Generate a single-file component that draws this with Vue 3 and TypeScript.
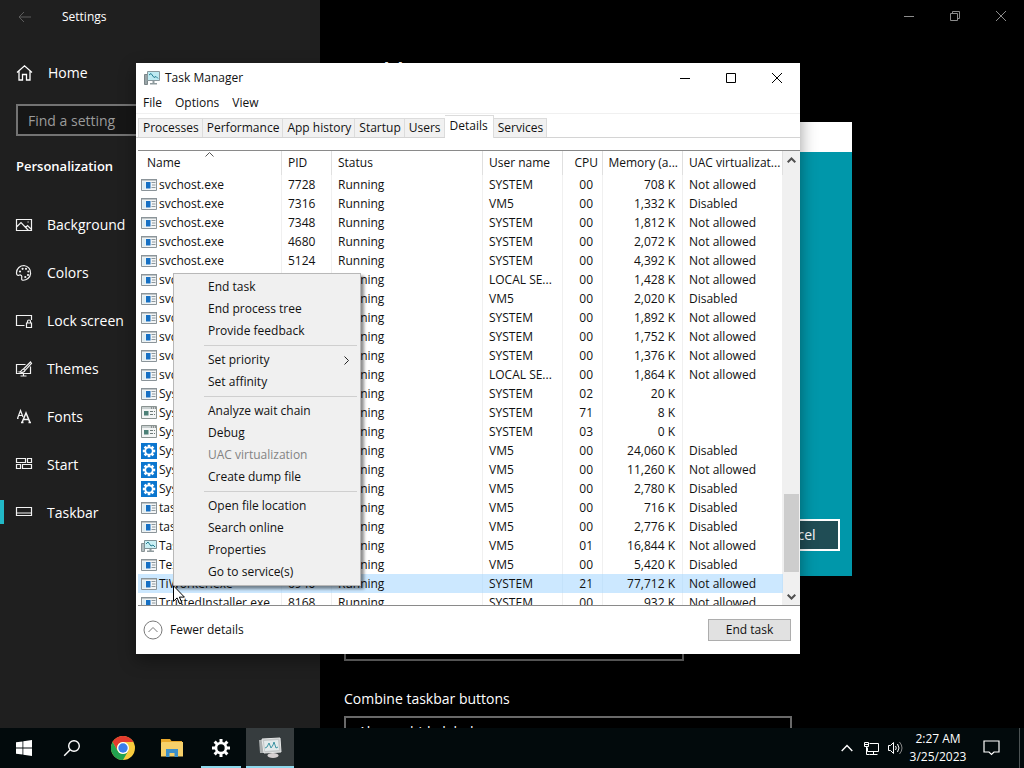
<script setup lang="ts">
import { ref } from 'vue'

type IconKind = 'app' | 'sys' | 'gear' | 'monitor'

interface ProcessRow {
  icon: IconKind
  name: string
  pid: string
  user: string
  cpu: string
  memory: string
  uac: string
  selected?: boolean
}

interface MenuEntry {
  label: string
  disabled?: boolean
  submenu?: boolean
}

const search = ref('')

const navItems = ['Background', 'Colors', 'Lock screen', 'Themes', 'Fonts', 'Start', 'Taskbar']
const tabs = ['Processes', 'Performance', 'App history', 'Startup', 'Users', 'Details', 'Services']

const row = (
  icon: IconKind,
  name: string,
  pid: string,
  user: string,
  cpu: string,
  memory: string,
  uac: string,
  selected = false,
): ProcessRow => ({ icon, name, pid, user, cpu, memory, uac, selected })

const rows: ProcessRow[] = [
  row('app', 'svchost.exe', '7728', 'SYSTEM', '00', '708 K', 'Not allowed'),
  row('app', 'svchost.exe', '7316', 'VM5', '00', '1,332 K', 'Disabled'),
  row('app', 'svchost.exe', '7348', 'SYSTEM', '00', '1,812 K', 'Not allowed'),
  row('app', 'svchost.exe', '4680', 'SYSTEM', '00', '2,072 K', 'Not allowed'),
  row('app', 'svchost.exe', '5124', 'SYSTEM', '00', '4,392 K', 'Not allowed'),
  row('app', 'svchost', '', 'LOCAL SE...', '00', '1,428 K', 'Not allowed'),
  row('app', 'svchost', '', 'VM5', '00', '2,020 K', 'Disabled'),
  row('app', 'svchost', '', 'SYSTEM', '00', '1,892 K', 'Not allowed'),
  row('app', 'svchost', '', 'SYSTEM', '00', '1,752 K', 'Not allowed'),
  row('app', 'svchost', '', 'SYSTEM', '00', '1,376 K', 'Not allowed'),
  row('app', 'svchost', '', 'LOCAL SE...', '00', '1,864 K', 'Not allowed'),
  row('app', 'System', '', 'SYSTEM', '02', '20 K', ''),
  row('sys', 'System', '', 'SYSTEM', '71', '8 K', ''),
  row('sys', 'System', '', 'SYSTEM', '03', '0 K', ''),
  row('gear', 'System', '', 'VM5', '00', '24,060 K', 'Disabled'),
  row('gear', 'System', '', 'VM5', '00', '11,260 K', 'Not allowed'),
  row('gear', 'System', '', 'VM5', '00', '2,780 K', 'Disabled'),
  row('app', 'taskhost', '', 'VM5', '00', '716 K', 'Disabled'),
  row('app', 'taskhost', '', 'VM5', '00', '2,776 K', 'Disabled'),
  row('monitor', 'Taskmgr', '', 'VM5', '01', '16,844 K', 'Not allowed'),
  row('app', 'TextInput', '', 'VM5', '00', '5,420 K', 'Disabled'),
  row('app', 'TiWorker.exe', '6940', 'SYSTEM', '21', '77,712 K', 'Not allowed', true),
  row('app', 'TrustedInstaller.exe', '8168', 'SYSTEM', '00', '932 K', 'Not allowed'),
]

const menuGroups: MenuEntry[][] = [
  [{ label: 'End task' }, { label: 'End process tree' }, { label: 'Provide feedback' }],
  [{ label: 'Set priority', submenu: true }, { label: 'Set affinity' }],
  [
    { label: 'Analyze wait chain' },
    { label: 'Debug' },
    { label: 'UAC virtualization', disabled: true },
    { label: 'Create dump file' },
  ],
  [
    { label: 'Open file location' },
    { label: 'Search online' },
    { label: 'Properties' },
    { label: 'Go to service(s)' },
  ],
]

const teeth = [0, 45, 90, 135, 180, 225, 270, 315]
</script>

<template>
  <div class="desktop">
    <section class="settings">
      <aside class="side">
        <header class="side-title">
          <button class="back" aria-label="Back">
            <svg width="14" height="12" viewBox="0 0 14 12" fill="none" stroke="#5c5c5c"><path d="M13 6H1M6 1L1 6l5 5" /></svg>
          </button>
          <span>Settings</span>
        </header>
        <a href="#" class="nav-item home">
          <svg width="18" height="18" viewBox="0 0 18 18" fill="none" stroke="#fff" stroke-width="1.3"><path d="M2 8.500L9.500 1.800l7.500 6.700M4 7v9h3.500v-5.500h4V16H15V7" /></svg>
          <span>Home</span>
        </a>
        <input v-model="search" class="find" type="text" placeholder="Find a setting" aria-label="Find a setting" />
        <h2>Personalization</h2>
        <nav>
          <a v-for="item in navItems" :key="item" href="#" class="nav-item" :class="{ current: item === 'Taskbar' }">
            <svg width="18" height="18" viewBox="0 0 18 18" fill="none" stroke="#f2f2f2" stroke-width="1.2">
              <template v-if="item === 'Background'">
                <path d="M1.500 3.500h15v11h-15zM1.500 11l4.500-4.500 7.500 8M10.500 11.500l2-2 4 4" />
                <path d="M12.500 6h1.200" />
              </template>
              <template v-else-if="item === 'Colors'">
                <path d="M9 1.500a7.300 7.300 0 1 1-1.500 14.700c-1.700-.4-.6-2.300-.7-3.700-.1-1.700-1.900-1.700-2.900-1.300C2.500 11.800 1.400 10.500 1.500 8.800 1.700 4.500 5 1.500 9 1.500z" />
                <g fill="#f2f2f2" stroke="none"><circle cx="5" cy="7.500" r="1.100" /><circle cx="7.600" cy="4.800" r="1.100" /><circle cx="11" cy="4.800" r="1.100" /><circle cx="13.400" cy="7.500" r="1.100" /><circle cx="13" cy="11" r="1.100" /><circle cx="10.300" cy="13" r="1.100" /></g>
              </template>
              <template v-else-if="item === 'Lock screen'">
                <path d="M9.500 13.500h-8v-10h15V8M11.500 11h5v4.500h-5zM12.500 11V9.500a1.500 1.500 0 0 1 3 0V11" />
              </template>
              <template v-else-if="item === 'Themes'">
                <path d="M10.500 4.500h-9v9h14v-7M8.500 13.500v2.500M5.500 16h6" />
                <path d="M15.500 2L8.500 9l1.500 1.500L16.500 3.500zM8.500 9c-2 0-1.500 2.500-4 3 2.500.8 5.500 0 5.500-1.500" />
              </template>
              <template v-else-if="item === 'Fonts'">
                <path d="M2.500 10.500L5.500 2.500l2.500 6.500M3.500 7.500h3.500M2 10.500h1.500" />
                <path d="M7 14.500l4-9.500 4 9.500M8.500 11.500h5M6 14.500h2.500M13.500 14.500h2.500" stroke-width="1.500" />
              </template>
              <template v-else-if="item === 'Start'">
                <path d="M1.500 2.500h9v4h-9zM12.500 2.500h4v4h-4zM1.500 8.500h4v4h-4zM7.500 8.500h9v4h-9z" />
              </template>
              <path v-else d="M1.500 3.500h15v8h-15zM1.500 9h15" />
            </svg>
            <span>{{ item }}</span>
          </a>
        </nav>
      </aside>
      <main class="page">
        <div class="window-controls dim">
          <button aria-label="Minimize settings"><svg width="10" height="10" viewBox="0 0 10 10" fill="none" stroke="#8c8c8c"><path d="M0 5.500h10" /></svg></button>
          <button aria-label="Restore settings"><svg width="10" height="10" viewBox="0 0 10 10" fill="none" stroke="#8c8c8c"><path d="M.5 2.500h7v7h-7zM2.500 2.500v-2h7v7h-2" /></svg></button>
          <button aria-label="Close settings"><svg width="10" height="10" viewBox="0 0 10 10" fill="none" stroke="#8c8c8c"><path d="M0 0l10 10M10 0L0 10" /></svg></button>
        </div>
        <h1>Taskbar</h1>
        <form class="fields">
          <select class="narrow" aria-label="Taskbar location on screen"><option>Bottom</option></select>
          <label for="combine">Combine taskbar buttons</label>
          <select id="combine"><option>Always, hide labels</option></select>
        </form>
      </main>
    </section>

    <section class="dialog">
      <div class="dialog-bar"></div>
      <div class="dialog-body"><button>Cancel</button></div>
    </section>

    <section class="taskman">
      <header class="tm-title">
        <svg width="16" height="16" viewBox="0 0 16 16"><path d="M.5 4.500h3v10h-3z" fill="#9aa5a8" stroke="#7b8588" /><path d="M3.500 1.500h12v9h-12z" fill="#bdeaf2" stroke="#89989d" /><path d="M5 5l2-1.500 3 4 2-1 2 2" fill="none" stroke="#257d91" /><path d="M8.500 11h2v2h-2zM6 13h7v1.500H6z" fill="#8f9b9e" /></svg>
        <span>Task Manager</span>
        <div class="window-controls">
          <button aria-label="Minimize"><svg width="10" height="10" viewBox="0 0 10 10" fill="none" stroke="#000"><path d="M0 5.500h10" /></svg></button>
          <button aria-label="Maximize"><svg width="10" height="10" viewBox="0 0 10 10" fill="none" stroke="#000"><path d="M.5.5h9v9h-9z" /></svg></button>
          <button aria-label="Close"><svg width="10" height="10" viewBox="0 0 10 10" fill="none" stroke="#000"><path d="M0 0l10 10M10 0L0 10" /></svg></button>
        </div>
      </header>
      <div class="menubar"><button>File</button><button>Options</button><button>View</button></div>
      <div class="tabs" role="tablist">
        <button v-for="tab in tabs" :key="tab" role="tab" :aria-selected="tab === 'Details'" :class="{ active: tab === 'Details' }">{{ tab }}</button>
      </div>
      <div class="list">
        <div class="grid-wrap">
          <table>
            <colgroup><col class="c-name" /><col class="c-pid" /><col class="c-status" /><col class="c-user" /><col class="c-cpu" /><col class="c-mem" /><col class="c-uac" /></colgroup>
            <thead>
              <tr>
                <th class="sorted">Name<svg width="9" height="5" viewBox="0 0 9 5" fill="none" stroke="#555"><path d="M.5 4.500l4-4 4 4" /></svg></th>
                <th>PID</th>
                <th>Status</th>
                <th>User name</th>
                <th class="num">CPU</th>
                <th class="num">Memory (a...</th>
                <th>UAC virtualizat...</th>
              </tr>
            </thead>
            <tbody>
              <tr v-for="(p, i) in rows" :key="i" :class="{ selected: p.selected }">
                <td>
                  <div class="name">
                    <svg width="16" height="16" viewBox="0 0 16 16">
                      <template v-if="p.icon === 'app'">
                        <path d="M.5 2.500h15v11H.5z" fill="#f3f5f6" stroke="#8b9499" /><path d="M0 2h16v1.500H0z" fill="#8b9499" />
                        <path d="M1.500 4.500h3v8h-3z" fill="#dcecf2" /><path d="M5 5h4.500v6.500H5z" fill="#1670c4" />
                        <path d="M10.500 5.500h4M11 8h3.500M10.500 10.500h4" stroke="#8d989e" />
                      </template>
                      <template v-else-if="p.icon === 'sys'">
                        <path d="M.5 1.500h15v12H.5z" fill="#f3f5f5" stroke="#8a9391" /><path d="M1 2h14v2H1z" fill="#c8cfcf" /><path d="M10 3h1M12 3h1M14 3h1" stroke="#555" />
                        <path d="M3 6h4.500v4.500H3z" fill="#4c8077" /><path d="M9 6.500h3M9 9.500h3M13 6.500h1M13 9.500h1" stroke="#6c7977" />
                      </template>
                      <template v-else-if="p.icon === 'gear'">
                        <path d="M0 0h16v16H0z" fill="#0b76cf" />
                        <g fill="#fff"><rect v-for="a in teeth" :key="a" x="6.700" y="1.800" width="2.600" height="3" :transform="`rotate(${a} 8 8)`" /></g>
                        <circle cx="8" cy="8" r="3.700" fill="none" stroke="#fff" stroke-width="1.700" />
                      </template>
                      <template v-else>
                        <path d="M.5 5.500h3v8h-3z" fill="#b3bdbf" stroke="#8a9497" /><path d="M3.500 2.500h12v8h-12z" fill="#c9eff4" stroke="#7f9297" />
                        <path d="M5 6l2-2 3 4 2-1 2 2" fill="none" stroke="#257d91" /><path d="M8.500 11h2v1.500h-2zM6 12.500h7V14H6z" fill="#8f9b9e" />
                      </template>
                    </svg>
                    <span>{{ p.name }}</span>
                  </div>
                </td>
                <td>{{ p.pid }}</td>
                <td>Running</td>
                <td>{{ p.user }}</td>
                <td class="num cpu">{{ p.cpu }}</td>
                <td class="num">{{ p.memory }}</td>
                <td>{{ p.uac }}</td>
              </tr>
            </tbody>
          </table>
        </div>
        <div class="scroll">
          <button aria-label="Scroll up"><svg width="9" height="6" viewBox="0 0 9 6" fill="none" stroke="#505050" stroke-width="2"><path d="M.7 5.300l3.800-3.800 3.800 3.800" /></svg></button>
          <div class="track"><div class="thumb"></div></div>
          <button aria-label="Scroll down"><svg width="9" height="6" viewBox="0 0 9 6" fill="none" stroke="#505050" stroke-width="2"><path d="M.7.7l3.800 3.800L8.300.7" /></svg></button>
        </div>
      </div>
      <footer class="tm-foot">
        <button class="fewer">
          <svg width="20" height="20" viewBox="0 0 20 20" fill="none" stroke="#7a7a7a"><circle cx="10" cy="10" r="9" /><path d="M5.500 12l4.500-4.500 4.500 4.500" /></svg>
          <span>Fewer details</span>
        </button>
        <button class="end">End task</button>
      </footer>
    </section>

    <div class="context" role="menu">
      <div v-for="(group, g) in menuGroups" :key="g" class="group">
        <button v-for="entry in group" :key="entry.label" role="menuitem" :disabled="entry.disabled">
          <span>{{ entry.label }}</span>
          <svg v-if="entry.submenu" width="5" height="9" viewBox="0 0 5 9" fill="none" stroke="#222"><path d="M.5.5l4 4-4 4" /></svg>
        </button>
      </div>
    </div>

    <svg class="cursor" width="13" height="20" viewBox="0 0 13 20"><path d="M.5.8v15.500l3.600-3.400 2.500 5.800 2.300-1-2.500-5.600h5z" fill="#fff" stroke="#000" /></svg>

    <footer class="taskbar">
      <button aria-label="Start"><svg width="16" height="16" viewBox="0 0 16 16" fill="#fff"><path d="M0 2.300L6.500 1.400v6.200H0zM7.300 1.300L16 0v7.600H7.300zM0 8.400h6.500v6.200L0 13.700zM7.300 8.400H16V16l-8.700-1.300z" /></svg></button>
      <button aria-label="Search"><svg width="18" height="18" viewBox="0 0 18 18" fill="none" stroke="#fff" stroke-width="1.400"><circle cx="11" cy="7" r="5.300" /><path d="M7.200 10.800L1.200 16.800" /></svg></button>
      <div class="apps">
        <button aria-label="Chrome">
          <svg width="24" height="24" viewBox="0 0 24 24">
            <circle cx="12" cy="12" r="12" fill="#f9cb3d" />
            <path d="M1.600 6A12 12 0 0 1 22.400 6H12a6 6 0 0 0-5.200 9z" fill="#e33b2e" />
            <path d="M1.600 6A12 12 0 0 0 12 24l5.200-9A6 6 0 0 1 6.800 15z" fill="#22a350" />
            <circle cx="12" cy="12" r="6" fill="#fff" /><circle cx="12" cy="12" r="4.700" fill="#3a7eea" />
          </svg>
        </button>
        <button aria-label="File Explorer">
          <svg width="22" height="18" viewBox="0 0 22 18"><path d="M0 0h9l1.500 2H21v15H0z" fill="#e9a92c" /><path d="M1 3h21v14.500H0V4z" fill="#f6d06a" /><path d="M5 10h12v8h-3.500v-4h-5v4H5z" fill="#3c8fca" /></svg>
        </button>
        <button class="running" aria-label="Settings">
          <svg width="18" height="18" viewBox="0 0 18 18"><g fill="#fff"><rect v-for="a in teeth" :key="a" x="7.500" y="0" width="3" height="4" :transform="`rotate(${a} 9 9)`" /></g><circle cx="9" cy="9" r="5" fill="none" stroke="#fff" stroke-width="2.600" /></svg>
        </button>
        <button class="focused" aria-label="Task Manager">
          <svg width="24" height="22" viewBox="0 0 24 22"><path d="M1 3h6v13H2z" fill="#a9adae" /><path d="M4 2l18-1 1 14-17 1z" fill="#c4c8c9" stroke="#e6e8e8" /><path d="M6 4l14-1 1 10-14 1z" fill="#e3eaeb" /><path d="M7 11l2-1 2-4 2 5 2-3 1-3 2 6 2-1" fill="none" stroke="#3d94a3" /><ellipse cx="15" cy="18.500" rx="5.500" ry="2.500" fill="#d5d0d1" /></svg>
        </button>
      </div>
      <div class="tray">
        <button aria-label="Show hidden icons"><svg width="12" height="8" viewBox="0 0 12 8" fill="none" stroke="#fff" stroke-width="1.400"><path d="M.7 7L6 1.500 11.300 7" /></svg></button>
        <button aria-label="Network"><svg width="17" height="15" viewBox="0 0 17 15" fill="none" stroke="#fff"><path d="M6.500 2.500h9v8h-11v-4M10.500 10.500v3M6.500 13.500h8M1.500 1.500h4v4h-4zM3.500 5.500v8h3M2 3.500h3" /></svg></button>
        <button aria-label="Volume"><svg width="17" height="16" viewBox="0 0 17 16" fill="none" stroke="#fff"><path d="M1.500 5.500h2l3-3v11l-3-3h-2zM8.500 6q1.500 2 0 4M10.500 4q3 4 0 8" /><path d="M12.500 2q5 6 0 12" stroke="#888" /></svg></button>
        <button class="clock"><span>2:27 AM</span><span>3/25/2023</span></button>
        <button class="notify" aria-label="Notifications"><svg width="17" height="16" viewBox="0 0 17 16" fill="none" stroke="#fff" stroke-width="1.200"><path d="M1 1h15v11h-5l-2.500 2.500L6 12H1z" /></svg></button>
        <button class="peek" aria-label="Show desktop"></button>
      </div>
    </footer>
  </div>
</template>

<style>
body {
  margin: 0;
  background: #000;
}
</style>

<style scoped>
.desktop {
  position: relative;
  display: flex;
  flex-direction: column;
  height: 100vh;
  overflow: hidden;
  background: #000;
  color: #fff;
  font: 12px/16px "Open Sans", "Noto Sans", sans-serif;
}

.desktop *,
.desktop *::before {
  box-sizing: border-box;
}

button,
input,
select {
  margin: 0;
  padding: 0;
  border: 0;
  border-radius: 0;
  background: none;
  color: inherit;
  font: inherit;
}

svg {
  display: block;
  flex: none;
}

a {
  color: inherit;
  text-decoration: none;
}

/* Settings window */
.settings {
  display: grid;
  grid-template-columns: 320px 1fr;
  flex: 1;
  min-height: 0;
  overflow: hidden;
}

.side {
  background: #1f1f1f;
}

.side-title {
  display: flex;
  align-items: center;
  gap: 30px;
  height: 33px;
  padding-left: 18px;
}

.nav-item {
  position: relative;
  display: flex;
  align-items: center;
  gap: 14px;
  height: 48px;
  padding-left: 15px;
  font-size: 14px;
  line-height: 20px;
}

.home {
  gap: 15px;
  margin: 16px 0 7px;
}

.current::before {
  content: "";
  position: absolute;
  left: 0;
  top: 11px;
  width: 4px;
  height: 24px;
  background: #22b8c6;
}

.find {
  display: block;
  width: 288px;
  height: 32px;
  margin-left: 16px;
  padding: 0 10px;
  border: 2px solid #737373;
  background: #161616;
  font-size: 14px;
}

.find::placeholder {
  color: #9b9b9b;
  opacity: 1;
}

h2 {
  margin: 20px 0 25px 16px;
  font-size: 13px;
  line-height: 20px;
  font-weight: 600;
}

.page {
  display: flex;
  flex-direction: column;
  min-height: 0;
}

.window-controls {
  display: flex;
  justify-content: flex-end;
  height: 32px;
}

.window-controls button {
  display: grid;
  place-items: center;
  width: 46px;
}

h1 {
  margin: 23px 24px 0;
  font-size: 24px;
  line-height: 32px;
  font-weight: 600;
}

.fields {
  display: flex;
  flex-direction: column;
  margin: auto 24px -20px;
  font-size: 14px;
}

.fields select {
  appearance: none;
  width: 448px;
  height: 32px;
  padding: 0 12px;
  border: 2px solid #696969;
  background: #000;
  color: #fff;
  font-size: 14px;
}

.fields .narrow {
  width: 340px;
}

.fields label {
  margin: 28px 0 7px;
  line-height: 20px;
}

/* Teal dialog behind the task manager */
.dialog {
  position: absolute;
  left: 460px;
  top: 122px;
  width: 392px;
}

.dialog-bar {
  height: 30px;
  background: #fff;
}

.dialog-body {
  display: flex;
  justify-content: flex-end;
  align-items: flex-end;
  height: 424px;
  padding: 25px 12px;
  background: #0097aa;
}

.dialog-body button {
  width: 92px;
  height: 32px;
  border: 2px solid #fff;
  background: #204d55;
  font-size: 14px;
}

/* Task manager */
.taskman {
  position: absolute;
  left: 136px;
  top: 63px;
  width: 664px;
  background: #fff;
  color: #111;
  box-shadow: 0 6px 16px rgba(0, 0, 0, 0.4);
}

.tm-title {
  display: flex;
  align-items: center;
  gap: 5px;
  height: 30px;
  padding-left: 8px;
}

.tm-title .window-controls {
  margin-left: auto;
  height: 28px;
}

.menubar {
  display: flex;
  gap: 13px;
  height: 21px;
  padding: 0 7px;
  border-bottom: 1px solid #f0f0f0;
}

.tabs {
  display: flex;
  align-items: flex-end;
  height: 24px;
  padding-left: 2px;
  border-bottom: 1px solid #d4d4d4;
}

.tabs button {
  height: 19px;
  padding: 0 3px 0 4px;
  border: 1px solid #dcdcdc;
  border-left-width: 0;
  border-bottom: 0;
  background: #f1f1f1;
}

.tabs button:first-child {
  border-left-width: 1px;
}

.tabs .active {
  height: 23px;
  margin-bottom: -1px;
  padding: 0 5px 3px;
  background: #fff;
}

.list {
  display: flex;
  height: 456px;
  margin: 12px 0 0 2px;
  border-top: 1px solid #8a8a8a;
  border-bottom: 1px solid #8a8a8a;
}

.grid-wrap {
  flex: 1;
  min-width: 0;
  overflow: hidden;
}

table {
  width: 100%;
  table-layout: fixed;
  border-collapse: separate;
  border-spacing: 0;
}

.c-name { width: 144px; }
.c-pid { width: 50px; }
.c-status { width: 151px; }
.c-user { width: 80px; }
.c-cpu { width: 40px; }
.c-mem { width: 80px; }

th,
td {
  height: 19px;
  padding: 0 6px;
  border-right: 1px solid #f0f0f0;
  font-weight: 400;
  line-height: 16px;
  text-align: left;
  white-space: nowrap;
  overflow: hidden;
}

th {
  height: 24px;
  padding-right: 0;
  border-right-color: #e0e0e0;
}

th:first-child {
  padding-left: 9px;
}

td:first-child {
  padding: 0 0 0 3px;
}

th.num {
  padding: 0 4px 0 0;
  text-align: right;
}

td.num {
  padding-right: 7px;
  text-align: right;
}

td.cpu {
  padding-right: 9px;
}

.sorted {
  position: relative;
}

.sorted svg {
  position: absolute;
  left: 67px;
  top: 1px;
}

.name {
  display: flex;
  align-items: center;
  gap: 2px;
}

.selected td {
  background: #cce8ff;
  border-right-color: #c4e2fa;
}

.scroll {
  display: flex;
  flex-direction: column;
  width: 17px;
  background: #f0f0f0;
}

.scroll button {
  display: grid;
  place-items: center;
  height: 17px;
}

.track {
  display: flex;
  flex-direction: column;
  justify-content: flex-end;
  flex: 1;
  padding: 0 1px 16px;
}

.thumb {
  height: 78px;
  background: #cdcdcd;
}

.tm-foot {
  display: flex;
  align-items: center;
  justify-content: space-between;
  height: 48px;
  padding: 0 9px 0 7px;
}

.fewer {
  display: flex;
  align-items: center;
  gap: 7px;
}

.end {
  width: 83px;
  height: 22px;
  border: 1px solid #adadad;
  background: #e1e1e1;
}

/* Context menu */
.context {
  position: absolute;
  left: 173px;
  top: 273px;
  width: 188px;
  padding: 2px;
  border: 1px solid #b8b8b8;
  background: #f0f0f0;
  color: #111;
  box-shadow: 3px 3px 3px rgba(0, 0, 0, 0.45);
}

.group + .group::before {
  content: "";
  display: block;
  height: 1px;
  margin: 3px 1px 3px 28px;
  background: #cfcfcf;
}

.context button {
  display: flex;
  align-items: center;
  justify-content: space-between;
  width: 100%;
  height: 22px;
  padding: 0 9px 0 32px;
}

.context button:disabled {
  color: #838383;
}

.cursor {
  position: absolute;
  left: 173px;
  top: 585px;
}

/* Taskbar */
.taskbar {
  display: flex;
  height: 40px;
  background: #020a0c;
}

.taskbar > button,
.apps button {
  display: grid;
  place-items: center;
  width: 48px;
}

.apps {
  display: flex;
  gap: 1px;
  margin-left: 3px;
}

.running {
  background: linear-gradient(#8ed8ec, #8ed8ec) center bottom / 40px 2px no-repeat;
}

.focused {
  background: linear-gradient(#8ed8ec, #8ed8ec) center bottom / 100% 2px no-repeat #363c3e;
}

.tray {
  display: flex;
  margin-left: auto;
}

.tray button {
  display: grid;
  place-items: center;
  width: 24px;
}

.tray .clock {
  width: 62px;
  align-content: center;
  line-height: 18px;
}

.tray .notify {
  width: 44px;
  margin-right: 6px;
}

.tray .peek {
  width: 5px;
  border-left: 1px solid #4c5354;
}
</style>
